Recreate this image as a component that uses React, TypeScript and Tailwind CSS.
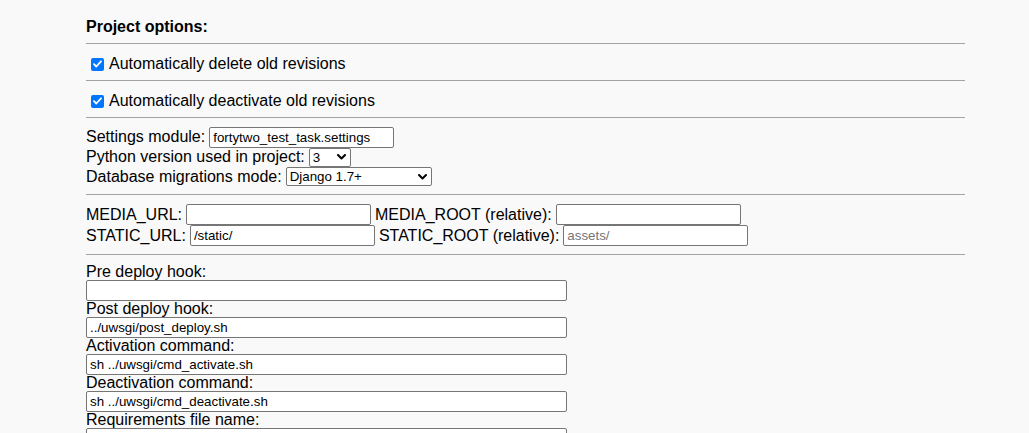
import { ReactNode } from "react";

const font = { fontFamily: '"Liberation Sans", Arial, sans-serif' };

function Rule() {
  return <div className="h-px w-full bg-[#a3a3a3]" />;
}

function TextBox({
  value,
  placeholder,
  width = "w-[185px]",
}: {
  value?: string;
  placeholder?: string;
  width?: string;
}) {
  return (
    <input
      type="text"
      defaultValue={value}
      placeholder={placeholder}
      className={`${width} h-[21px] rounded-[2px] border border-[#767676] bg-white px-[3px] text-[13.33px] leading-[15px] text-black placeholder:text-[#757575] outline-none`}
    />
  );
}

function Select({ value, width }: { value: string; width: string }) {
  return (
    <div
      className={`${width} flex h-[19px] items-center justify-between rounded-[2px] border border-[#767676] bg-white pl-[3px] pr-[4px] text-[13.33px] leading-[15px] text-black`}
    >
      <span>{value}</span>
      <svg width="9" height="6" viewBox="0 0 9 6" aria-hidden="true">
        <path
          d="M1 1l3.5 3.5L8 1"
          fill="none"
          stroke="#000"
          strokeWidth={2}
          strokeLinecap="round"
          strokeLinejoin="round"
        />
      </svg>
    </div>
  );
}

function Check({ label }: { label: string }) {
  return (
    <div className="flex h-[36px] items-center pt-[4px]">
      <span className="ml-[5px] mr-[5px] flex h-[13px] w-[13px] items-center justify-center rounded-[2px] bg-[#0075ff]">
        <svg width="9" height="8" viewBox="0 0 9 8" aria-hidden="true">
          <path
            d="M1 4.2l2.3 2.3L8 1.3"
            fill="none"
            stroke="#fff"
            strokeWidth={1.8}
            strokeLinecap="round"
            strokeLinejoin="round"
          />
        </svg>
      </span>
      <label>{label}</label>
    </div>
  );
}

function Row({ children, h }: { children: ReactNode; h: string }) {
  return <div className={`flex ${h} items-center gap-[4px]`}>{children}</div>;
}

function Hook({ label, value }: { label: string; value?: string }) {
  return (
    <div className="flex flex-col">
      <div className="h-[16px] leading-[16px]">{label}</div>
      <TextBox value={value} width="w-[481px]" />
    </div>
  );
}

export default function App() {
  return (
    <div
      className="h-[433px] overflow-hidden bg-[#f9f9f9] text-[16px] text-black"
      style={font}
    >
      <div className="ml-[86px] w-[879px]">
        {/* Header */}
        <div className="h-[43px] pt-[18px] font-bold leading-[18px]">
          Project options:
        </div>
        <Rule />
        <Check label="Automatically delete old revisions" />
        <Rule />
        <Check label="Automatically deactivate old revisions" />
        <Rule />

        {/* Settings */}
        <div className="flex h-[76px] flex-col pt-[9px]">
          <Row h="h-[20px]">
            <span>Settings module:</span>
            <TextBox value="fortytwo_test_task.settings" />
          </Row>
          <Row h="h-[20px]">
            <span>Python version used in project:</span>
            <Select value="3" width="w-[42px]" />
          </Row>
          <Row h="h-[19px]">
            <span>Database migrations mode:</span>
            <Select value="Django 1.7+" width="w-[146px]" />
          </Row>
        </div>
        <Rule />

        {/* Media / static */}
        <div className="flex h-[59px] flex-col pt-[9px]">
          <Row h="h-[21px]">
            <span>MEDIA_URL:</span>
            <TextBox />
            <span>MEDIA_ROOT (relative):</span>
            <TextBox />
          </Row>
          <Row h="h-[21px]">
            <span>STATIC_URL:</span>
            <TextBox value="/static/" />
            <span>STATIC_ROOT (relative):</span>
            <TextBox placeholder="assets/" />
          </Row>
        </div>
        <Rule />

        {/* Hooks */}
        <div className="flex flex-col pt-[9px]">
          <Hook label="Pre deploy hook:" />
          <Hook label="Post deploy hook:" value="../uwsgi/post_deploy.sh" />
          <Hook label="Activation command:" value="sh ../uwsgi/cmd_activate.sh" />
          <Hook
            label="Deactivation command:"
            value="sh ../uwsgi/cmd_deactivate.sh"
          />
          <Hook label="Requirements file name:" />
        </div>
      </div>
    </div>
  );
}
